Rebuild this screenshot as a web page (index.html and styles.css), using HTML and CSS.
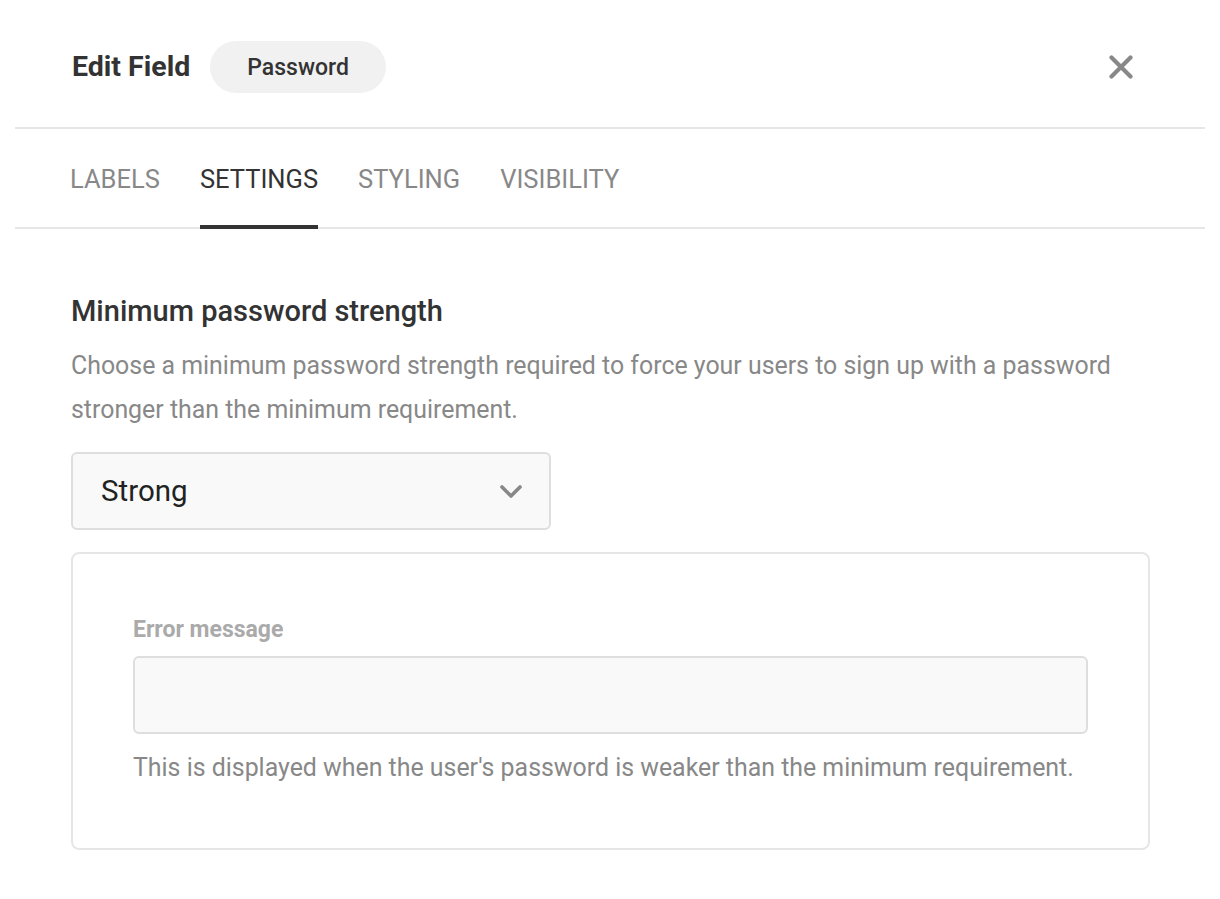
FILE: index.html
```html
<!DOCTYPE html>
<html lang="en">
<head>
<meta charset="utf-8">
<title>Edit Field</title>
<link rel="stylesheet" href="styles.css">
</head>
<body>
<div class="panel">
  <header class="header">
    <h1 class="title">Edit Field</h1>
    <span class="pill">Password</span>
    <button class="close" aria-label="Close">
      <svg width="24" height="24" viewBox="0 0 24 24"><path d="M2.5 2.5 L21.5 21.5 M21.5 2.5 L2.5 21.5" stroke="#888" stroke-width="4.2" stroke-linecap="round"/></svg>
    </button>
  </header>
  <nav class="tabs">
    <span class="tab">LABELS</span>
    <span class="tab active">SETTINGS</span>
    <span class="tab">STYLING</span>
    <span class="tab">VISIBILITY</span>
  </nav>
  <main class="content">
    <h2 class="heading">Minimum password strength</h2>
    <p class="desc">Choose a minimum password strength required to force your users to sign up with a password stronger than the minimum requirement.</p>
    <div class="select">
      <span class="select-value">Strong</span>
      <svg class="chev" width="22" height="13" viewBox="0 0 22 13"><path d="M2 2 L11 11 L20 2" fill="none" stroke="#888" stroke-width="3.6" stroke-linecap="round" stroke-linejoin="round"/></svg>
    </div>
    <div class="card">
      <label class="field-label">Error message</label>
      <div class="input"></div>
      <p class="help">This is displayed when the user's password is weaker than the minimum requirement.</p>
    </div>
  </main>
</div>
</body>
</html>
```

FILE: styles.css
```css
* { box-sizing: border-box; }
html, body { margin: 0; padding: 0; background: #fff; }
body { font-family: Roboto, "Liberation Sans", sans-serif; color: #333; }

.panel { padding: 0 15px; }

.header {
  display: flex;
  align-items: center;
  padding: 41px 72px 34px 57px;
  border-bottom: 2px solid #e6e6e6;
}
.title {
  margin: 0;
  font-size: 28.5px;
  font-weight: 700;
  color: #333;
  line-height: 32px;
}
.pill {
  margin-left: 20px;
  height: 52px;
  padding: 0 37px;
  border-radius: 26px;
  background: #f1f1f1;
  font-size: 23px;
  font-weight: 500;
  color: #333;
  display: flex;
  align-items: center;
}
.close {
  margin-left: auto;
  border: 0;
  background: none;
  padding: 0;
  width: 24px;
  height: 24px;
  display: flex;
}

.tabs {
  display: flex;
  gap: 40px;
  padding-left: 55px;
  border-bottom: 2px solid #e6e6e6;
}
.tab {
  font-size: 25.5px;
  line-height: 30px;
  color: #888;
  padding: 35px 0 31px;
  border-bottom: 4px solid transparent;
  margin-bottom: -2px;
}
.tab.active {
  color: #333;
  border-bottom-color: #333;
}

.content {
  padding: 66px 55px 0 56px;
}
.heading {
  margin: 0;
  font-size: 29px;
  font-weight: 500;
  line-height: 32px;
  color: #333;
}
.desc {
  margin: 17px 0 0;
  font-size: 24.9px;
  line-height: 44px;
  color: #888;
}
.select {
  margin-top: 20px;
  width: 480px;
  height: 78px;
  border: 2px solid #dedede;
  border-radius: 6px;
  background: #f9f9f9;
  display: flex;
  align-items: center;
  justify-content: space-between;
  padding: 0 27px 0 28px;
}
.select-value {
  font-size: 29.5px;
  color: #222;
}
.card {
  margin-top: 22px;
  border: 2px solid #e6e6e6;
  border-radius: 8px;
  padding: 62px 60px 63px;
}
.field-label {
  display: block;
  font-size: 23px;
  font-weight: 700;
  line-height: 28px;
  color: #aaa;
}
.input {
  margin-top: 12px;
  height: 78px;
  border: 2px solid #dedede;
  border-radius: 6px;
  background: #f9f9f9;
}
.help {
  margin: 17px 0 0;
  font-size: 24.9px;
  line-height: 34px;
  color: #888;
}
```
